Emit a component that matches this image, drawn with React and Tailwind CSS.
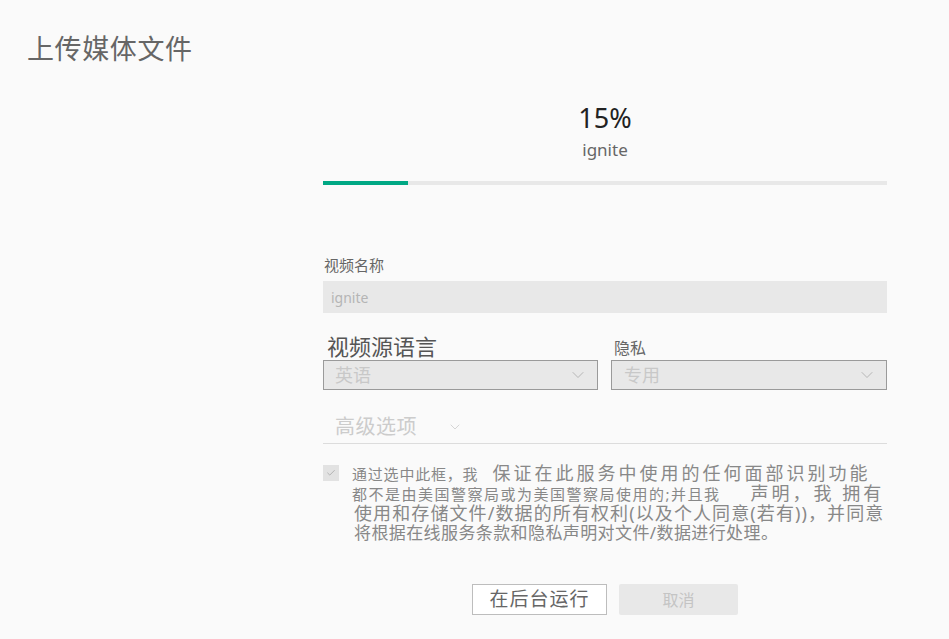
import { ChevronDown, Check } from "lucide-react"

const font = { fontFamily: '"Noto Sans", "Noto Sans CJK SC", sans-serif' }

export default function App() {
    return (
        <main className="w-full min-h-screen bg-[#fafafa] text-[#666]" style={font}>
            <div className="pt-[33px] pl-[27px]">
                <h1 className="text-[27px] leading-[32px] tracking-[0.6px] text-[#666]">上传媒体文件</h1>
            </div>

            <div className="ml-[323px] w-[564px] flex flex-col">
                <div className="mt-[37px] flex flex-col items-center">
                    <p className="text-[27px] leading-[32px] text-[#222]">15%</p>
                    <p className="mt-[5px] text-[17px] leading-[22px] text-[#666]">ignite</p>
                </div>

                <div className="mt-[20px] h-[4px] w-full bg-[#e8e8e8]">
                    <div className="h-full w-[15%] bg-[#00a884]"></div>
                </div>

                <label className="mt-[70px] text-[15px] leading-[20px] pl-[1px]">视频名称</label>
                <div className="mt-[6px] h-[32px] bg-[#e8e8e8] flex items-center px-[8px] text-[14px] text-[#b5b5b5]">ignite</div>

                <div className="mt-[20px] grid grid-cols-[275px_276px] gap-[13px]">
                    <div className="flex flex-col">
                        <p className="pl-[4px] text-[22px] leading-[26px] text-[#555]">视频源语言</p>
                        <div className="mt-[1px] h-[30px] border border-[#9a9a9a] bg-[#e8e8e8] flex items-center justify-between pl-[11px] pr-[9px]">
                            <span className="text-[18px] text-[#c8c8c8]">英语</span>
                            <ChevronDown className="w-[20px] h-[20px] text-[#b0b0b0]" strokeWidth={1.1} />
                        </div>
                    </div>
                    <div className="flex flex-col">
                        <p className="pl-[3px] pt-[4px] text-[16px] leading-[22px] text-[#666]">隐私</p>
                        <div className="mt-[1px] h-[30px] border border-[#9a9a9a] bg-[#e8e8e8] flex items-center justify-between pl-[12px] pr-[9px]">
                            <span className="text-[18px] text-[#c8c8c8]">专用</span>
                            <ChevronDown className="w-[20px] h-[20px] text-[#b0b0b0]" strokeWidth={1.1} />
                        </div>
                    </div>
                </div>

                <div className="mt-[24px] flex items-center gap-[30px] pl-[12px] pb-[3px] border-b border-[#dcdcdc]">
                    <span className="text-[20px] leading-[26px] tracking-[0.5px] text-[#cccccc]">高级选项</span>
                    <ChevronDown className="w-[16px] h-[16px] text-[#cccccc]" strokeWidth={1.2} />
                </div>

                <div className="mt-[20px] flex gap-[13px]">
                    <div className="mt-[1px] w-[16px] h-[16px] shrink-0 bg-[#e2e2e2] flex items-center justify-center">
                        <Check className="w-[10px] h-[10px] text-[#a8a8a8]" strokeWidth={2} />
                    </div>
                    <div className="flex flex-col text-[#888] whitespace-nowrap">
                        <p className="leading-[19px]">
                            <span className="text-[15px] tracking-[0.8px]">通过选中此框，我</span>
                            <span className="ml-[14px] text-[18px] tracking-[3px]">保证在此服务中使用的任何面部识别功能</span>
                        </p>
                        <p className="leading-[19px]">
                            <span className="text-[15px] tracking-[1.5px]">都不是由美国警察局或为美国警察局使用的;并且我</span>
                            <span className="ml-[30px] text-[18px] tracking-[3px]">声明，我 拥有</span>
                        </p>
                        <p className="leading-[19px] pl-[2px] text-[18px] tracking-[1.1px]">使用和存储文件/数据的所有权利(以及个人同意(若有))，并同意</p>
                        <p className="leading-[19px] pl-[2px] text-[17px] tracking-[0.4px]">将根据在线服务条款和隐私声明对文件/数据进行处理。</p>
                    </div>
                </div>

                <div className="mt-[42px] flex justify-center gap-[12px]">
                    <button className="w-[135px] h-[31px] bg-white border border-[#bdbdbd] text-[19px] text-[#666] tracking-[1px]">在后台运行</button>
                    <button className="w-[119px] h-[31px] bg-[#e8e8e8] rounded-[2px] text-[16px] text-[#c4c4c4]">取消</button>
                </div>
            </div>
        </main>
    )
}
